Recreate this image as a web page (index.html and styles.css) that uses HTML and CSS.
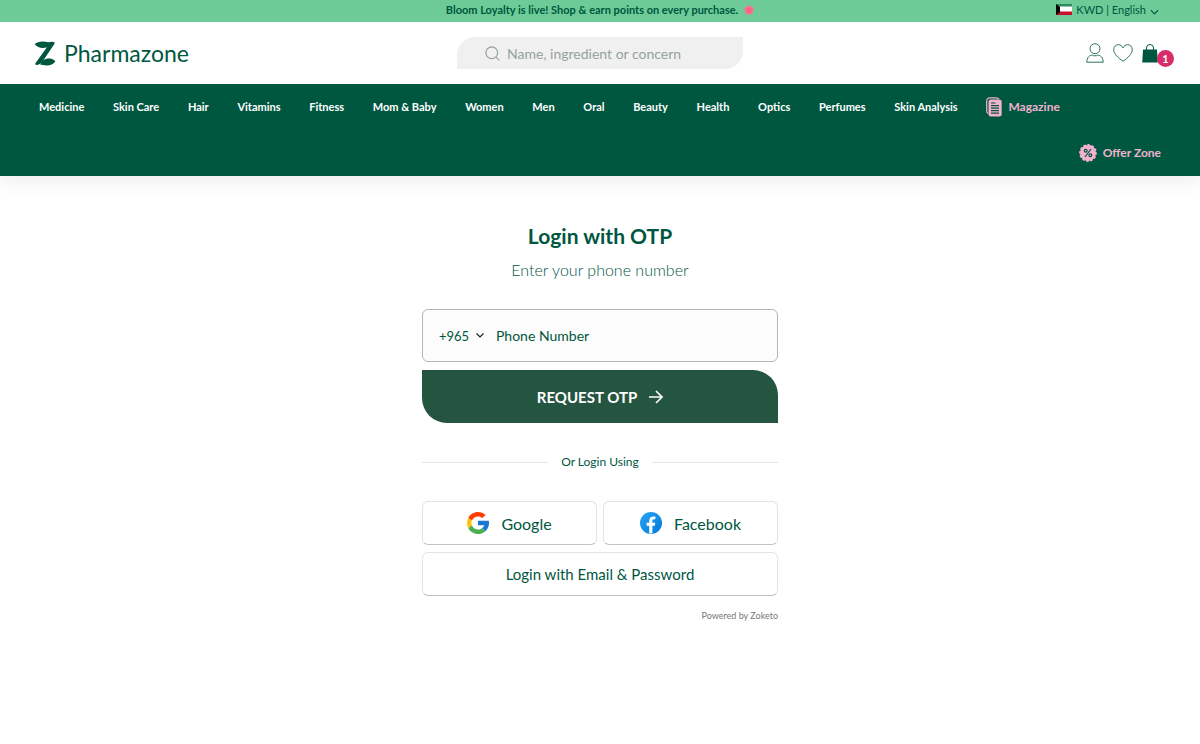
FILE: index.html
```html
<!DOCTYPE html>
<html lang="en">
<head>
    <meta charset="UTF-8">
    <meta name="viewport" content="width=device-width, initial-scale=1.0">
    <title>Login | Pharmazone</title>
    <link rel="stylesheet" href="styles.css">
</head>
<body>

    <!-- Announcement bar -->
    <div class="topbar">
        <p class="promo">
            Bloom Loyalty is live! Shop &amp; earn points on every purchase.
            <svg class="flower" viewBox="0 0 20 20" aria-hidden="true">
                <g fill="#ff6f91">
                    <circle cx="10" cy="5" r="4.4"/>
                    <circle cx="15" cy="8.6" r="4.4"/>
                    <circle cx="13.2" cy="14.6" r="4.4"/>
                    <circle cx="6.8" cy="14.6" r="4.4"/>
                    <circle cx="5" cy="8.6" r="4.4"/>
                </g>
                <circle cx="10" cy="10.4" r="3.6" fill="#ef3f6b"/>
                <circle cx="10" cy="10.4" r="1.6" fill="#ffd3dc"/>
            </svg>
        </p>
        <button class="locale" type="button">
            <svg class="flag" viewBox="0 0 16 11" aria-hidden="true">
                <path fill="#fff" d="M0 0h16v11H0z"/>
                <path fill="#2f8a5f" d="M0 0h16v2.500H0z"/>
                <path fill="#c8102e" d="M0 7.500h16V11H0z"/>
                <path d="M0 0l4 3v5l-4 3z"/>
            </svg>
            <span>KWD | English</span>
            <svg class="chevron" viewBox="0 0 10 6" fill="none" stroke="#00573f" stroke-width="1.3" aria-hidden="true"><path d="M1 1l4 4 4-4"/></svg>
        </button>
    </div>

    <!-- Logo, search, account -->
    <header class="header">
        <a class="logo" href="#">
            <svg class="logo-mark" viewBox="0 0 22 26" fill="#00573f" aria-hidden="true">
                <path d="M.3 3.200C3 .4 9-.5 14.500 1.400 17 .6 19.500.4 20.800 1.300c.5 1.500-.4 2.700-1.500 4L8.500 21.200c-1.800 2.500-4.500 4-7.300 3.600-.8-1.400.5-2.700 1.500-4L13 6.600C9 8.200 3 7.500.3 3.200z"/>
                <path d="M7 22.800c1-3 5-5 9-4.700 2.500.2 4.600 1.300 5.800 2.900-2.300 3.300-6 4.700-9.500 4.400-2.200-.1-4.200-.8-6.300-.7z"/>
            </svg>
            <span>Pharmazone</span>
        </a>
        <form class="search" role="search">
            <svg class="search-icon" viewBox="0 0 16 16" fill="none" stroke="#94a39d" stroke-width="1.3" aria-hidden="true"><circle cx="7.200" cy="7.200" r="6.300"/><path d="M11.800 11.800l3.500 3.500"/></svg>
            <input class="search-input" type="search" placeholder="Name, ingredient or concern" aria-label="Search">
        </form>
        <div class="account">
            <a class="icon-link" href="#" aria-label="Account">
                <svg class="icon-user" viewBox="0 0 18 20" fill="none" stroke="#2c7560" stroke-width="1"><circle cx="9" cy="5.700" r="5"/><path d="M.8 19.200c0-4.800 2.800-7 5.500-7 1 .8 4.400.8 5.400 0 2.700 0 5.500 2.200 5.500 7z"/></svg>
            </a>
            <a class="icon-link" href="#" aria-label="Wishlist">
                <svg class="icon-heart" viewBox="0 0 20 18" fill="none" stroke="#2c7560" stroke-width="1"><path d="M10 17.300C5 13.700.7 9.800.7 5.600.7 2.700 2.800.7 5.300.7 7.500.7 9.100 2 10 4 10.900 2 12.500.7 14.700.7c2.500 0 4.600 2 4.600 4.900 0 4.200-4.300 8.100-9.300 11.700z"/></svg>
            </a>
            <a class="icon-link cart" href="#" aria-label="Cart, 1 item">
                <svg class="icon-bag" viewBox="0 0 16 19"><path d="M4.500 6V4a3.500 3.500 0 0 1 7 0v2" fill="none" stroke="#00573f"/><path fill="#00573f" d="M1 5.500h14l.8 13H.2z"/></svg>
                <span class="badge">1</span>
            </a>
        </div>
    </header>

    <!-- Main menu -->
    <nav class="nav">
        <ul class="menu">
            <li><a href="#">Medicine</a></li>
            <li><a href="#">Skin Care</a></li>
            <li><a href="#">Hair</a></li>
            <li><a href="#">Vitamins</a></li>
            <li><a href="#">Fitness</a></li>
            <li><a href="#">Mom &amp; Baby</a></li>
            <li><a href="#">Women</a></li>
            <li><a href="#">Men</a></li>
            <li><a href="#">Oral</a></li>
            <li><a href="#">Beauty</a></li>
            <li><a href="#">Health</a></li>
            <li><a href="#">Optics</a></li>
            <li><a href="#">Perfumes</a></li>
            <li><a href="#">Skin Analysis</a></li>
            <li>
                <a class="pink" href="#">
                    <svg class="icon-mag" viewBox="0 0 16 20" aria-hidden="true">
                        <path d="M2 16.500C1 16 .7 15 .7 14V4C.7 2 2 .8 4 .8h6c1.500 0 2.500.5 3 1.500" fill="none" stroke="#f2b1cf" stroke-width="1.200"/>
                        <rect x="2.500" y="2.500" width="13.200" height="17" rx="2.500" fill="#f2b1cf"/>
                        <path d="M5 6h4.500M5 8.700h8M5 11.200h8M5 13.700h8M5 16.200h8" stroke="#00573f" stroke-width="1.200"/>
                    </svg>
                    Magazine
                </a>
            </li>
        </ul>
        <a class="pink offer" href="#">
            <svg class="icon-offer" viewBox="0 0 18 18" aria-hidden="true">
                <circle cx="9" cy="9" r="7.900" fill="#f2b1cf"/>
                <circle cx="9" cy="9" r="7.800" fill="none" stroke="#f2b1cf" stroke-width="2.200" stroke-linecap="round" stroke-dasharray="1 3.080"/>
                <g fill="none" stroke="#00573f" stroke-width="1.200"><circle cx="6.700" cy="6.700" r="1.400"/><circle cx="11.300" cy="11.300" r="1.400"/><path d="M12 5l-6 8"/></g>
            </svg>
            Offer Zone
        </a>
    </nav>

    <!-- Login -->
    <main class="login">
        <h1 class="title">Login with OTP</h1>
        <p class="subtitle">Enter your phone number</p>

        <form class="otp-form">
            <div class="phone">
                <select class="code" aria-label="Country code">
                    <option>+965</option>
                </select>
                <svg class="code-arrow" viewBox="0 0 8 5" fill="none" stroke="#222" stroke-width="1.200" aria-hidden="true"><path d="M.5.5L4 4 7.500.5"/></svg>
                <input class="phone-input" type="tel" placeholder="Phone Number" aria-label="Phone Number">
            </div>
            <button class="request" type="submit">
                REQUEST OTP
                <svg class="arrow" viewBox="0 0 14 14" fill="none" stroke="#fff" stroke-width="1.600" aria-hidden="true"><path d="M0 7h13M7 1l6 6-6 6"/></svg>
            </button>
        </form>

        <div class="divider">Or Login Using</div>

        <div class="providers">
            <button class="provider" type="button">
                <svg class="brand" viewBox="4 4 40 40" aria-hidden="true">
                    <path fill="#1976d2" d="M43.600 20.100H24v8h11.300c-.8 2.200-2.200 4.200-4.100 5.600l6.200 5.200C37 39.200 44 34 44 24c0-1.300-.1-2.600-.4-3.900z"/>
                    <path fill="#ff3d00" d="M6.300 14.700l6.600 4.800C14.700 15.100 19 12 24 12c3.100 0 5.800 1.200 8 3l5.700-5.600C34 6.100 29.300 4 24 4 16.300 4 9.700 8.300 6.300 14.700z"/>
                    <path fill="#4caf50" d="M24 44c5.200 0 9.900-2 13.400-5.200l-6.200-5.200c-2 1.500-4.500 2.400-7.200 2.400-5.200 0-9.600-3.300-11.300-7.900l-6.500 5C9.500 39.600 16.200 44 24 44z"/>
                    <path fill="#ffc107" d="M6.300 14.700C4.800 17.500 4 20.600 4 24c0 3.300.8 6.400 2.200 9.100l6.500-5c-.5-1.300-.7-2.700-.7-4.100 0-1.600.3-3.100.9-4.500z"/>
                </svg>
                Google
            </button>
            <button class="provider" type="button">
                <svg class="brand" viewBox="0 0 22 22" aria-hidden="true">
                    <defs><linearGradient id="fb" x1="0" y1="0" x2="1" y2="1"><stop offset="0" stop-color="#2aa4f4"/><stop offset="1" stop-color="#007ad9"/></linearGradient></defs>
                    <circle cx="11" cy="11" r="11" fill="url(#fb)"/>
                    <path fill="#fff" d="M9.200 21.500v-7.700H6.600v-3.100h2.600V8.900c0-3 1.500-4.500 4.200-4.500.8 0 1.500.1 2 .2v2.700H14c-1.200 0-1.600.6-1.600 1.700v1.700h2.900l-.5 3.100h-2.400v7.700z"/>
                </svg>
                Facebook
            </button>
            <button class="provider wide" type="button">Login with Email &amp; Password</button>
        </div>

        <p class="powered">Powered by Zoketo</p>
    </main>

</body>
</html>
```
FILE: styles.css
```css
* {
    box-sizing: border-box;
}

body {
    margin: 0;
    background-color: #fff;
    color: #00573f;
    font-family: Lato, "Liberation Sans", sans-serif;
}

a {
    color: inherit;
    text-decoration: none;
}

p, h1, ul {
    margin: 0;
    padding: 0;
}

svg {
    display: block;
    flex-shrink: 0;
}

button, input, select {
    font-family: inherit;
    color: inherit;
}

button {
    padding: 0;
    cursor: pointer;
}

/* Announcement bar */
.topbar {
    display: grid;
    grid-template-columns: 1fr auto 1fr;
    align-items: center;
    height: 22px;
    padding: 0 41px 3px;
    background-color: #6dcb98;
}

.promo {
    grid-column: 2;
    display: flex;
    align-items: center;
    gap: 6px;
    font-size: 11px;
    font-weight: 700;
}

.flower {
    width: 10px;
    height: 10px;
}

.locale {
    justify-self: end;
    display: flex;
    align-items: center;
    gap: 4px;
    border: 0;
    background: none;
    font-size: 11px;
}

.flag {
    width: 16px;
    height: 11px;
}

.chevron {
    width: 9px;
    height: 6px;
    margin-top: 5px;
}

/* Header */
.header {
    display: grid;
    grid-template-columns: 1fr 286px 1fr;
    align-items: center;
    height: 62px;
    padding: 0 26px;
}

.logo {
    display: flex;
    align-items: center;
    gap: 8px;
    padding-left: 8px;
    font-size: 23px;
}

.logo-mark {
    width: 22px;
    height: 25px;
}

.search {
    display: flex;
    align-items: center;
    gap: 7px;
    height: 32px;
    padding: 0 28px;
    border-radius: 18px 0;
    background-color: #f0f0f0;
}

.search-icon {
    width: 15px;
    height: 15px;
}

.search-input {
    flex: 1;
    min-width: 0;
    padding: 0;
    border: 0;
    outline: 0;
    background: none;
    font-size: 14px;
}

.search-input::placeholder {
    color: #94a39d;
    opacity: 1;
}

.account {
    justify-self: end;
    display: flex;
    align-items: center;
    gap: 9px;
}

.icon-user {
    width: 18px;
    height: 20px;
}

.icon-heart {
    width: 20px;
    height: 18px;
}

.icon-bag {
    width: 16px;
    height: 19px;
}

.cart {
    position: relative;
    padding-right: 16px;
}

.badge {
    position: absolute;
    right: 0;
    top: 6px;
    width: 17px;
    height: 17px;
    border-radius: 50%;
    background-color: #d82c6b;
    color: #fff;
    font-size: 11px;
    font-weight: 700;
    line-height: 17px;
    text-align: center;
}

/* Main menu */
.nav {
    display: flex;
    flex-direction: column;
    padding: 0 39px;
    background-color: #00573f;
    box-shadow: 0 8px 16px rgba(0, 0, 0, 0.06);
    color: #fff;
    font-size: 11px;
    font-weight: 700;
    line-height: 46px;
}

.menu {
    display: flex;
    justify-content: space-between;
    margin-right: 101px;
    list-style: none;
    white-space: nowrap;
}

.pink {
    display: flex;
    align-items: center;
    gap: 6px;
    color: #f2b1cf;
    font-size: 12px;
}

.offer {
    align-self: flex-end;
}

.icon-mag {
    width: 16px;
    height: 20px;
}

.icon-offer {
    width: 18px;
    height: 18px;
}

/* Login */
.login {
    width: 100%;
    max-width: 388px;
    margin: 0 auto;
    padding: 46px 16px;
}

.title {
    font-size: 21px;
    line-height: 28px;
    text-align: center;
}

.subtitle {
    margin-top: 10px;
    font-size: 16px;
    font-weight: 300;
    line-height: 20px;
    text-align: center;
}

.otp-form {
    display: flex;
    flex-direction: column;
    gap: 8px;
    margin-top: 29px;
}

.phone {
    display: flex;
    align-items: center;
    height: 53px;
    padding: 0 16px;
    border: 1px solid #b5b5b5;
    border-radius: 6px;
    background-color: #fcfcfc;
}

.code {
    width: 37px;
    padding: 0;
    border: 0;
    appearance: none;
    background: none;
    font-size: 13px;
}

.code-arrow {
    width: 8px;
    height: 5px;
}

.phone-input {
    flex: 1;
    min-width: 0;
    margin-left: 12px;
    padding: 0;
    border: 0;
    outline: 0;
    background: none;
    font-size: 14px;
}

.phone-input::placeholder {
    color: #00573f;
    opacity: 1;
}

.request {
    display: flex;
    align-items: center;
    justify-content: center;
    gap: 12px;
    height: 53px;
    border: 0;
    border-radius: 0 25px;
    background-color: #245540;
    color: #fff;
    font-size: 15px;
    font-weight: 700;
}

.arrow {
    width: 14px;
    height: 14px;
}

.divider {
    display: flex;
    align-items: center;
    gap: 13px;
    margin: 30px 0;
    font-size: 12px;
    line-height: 18px;
}

.divider::before,
.divider::after {
    content: "";
    flex: 1;
    height: 1px;
    background-color: #e5e5e5;
}

.providers {
    display: grid;
    grid-template-columns: 1fr 1fr;
    gap: 7px 6px;
}

.provider {
    display: flex;
    align-items: center;
    justify-content: center;
    gap: 12px;
    height: 44px;
    border: 1px solid #e3e3e3;
    border-bottom-color: #c4c4c4;
    border-radius: 6px;
    background-color: #fff;
    font-size: 16px;
}

.wide {
    grid-column: span 2;
    font-size: 15px;
}

.brand {
    width: 22px;
    height: 22px;
}

.powered {
    margin-top: 13px;
    color: #777;
    font-size: 9px;
    line-height: 14px;
    text-align: right;
}
```
